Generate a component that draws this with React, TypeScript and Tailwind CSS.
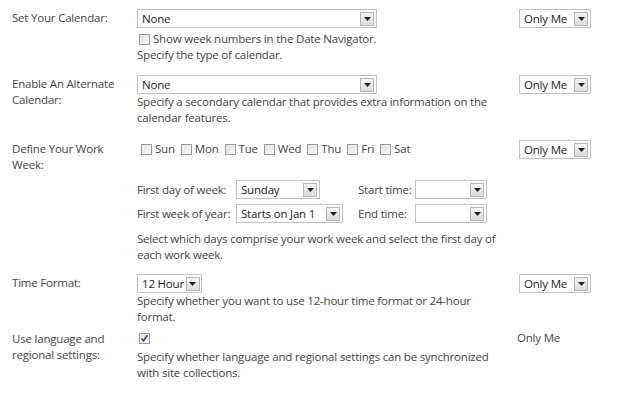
import React from 'react';

const font = { fontFamily: '"Open Sans", "Noto Sans", Arial, sans-serif' };

function Arrow() {
  return (
    <span className="flex h-[14px] w-[14px] shrink-0 items-center justify-center border border-[#b5b5b5] bg-gradient-to-b from-[#f4f4f4] to-[#dcdcdc]">
      <svg width="7" height="4" viewBox="0 0 7 4">
        <path d="M0 0h7L3.5 4z" fill="#222" />
      </svg>
    </span>
  );
}

function Select({ value = '', width }: { value?: string; width: string }) {
  return (
    <div className={`flex h-[19px] items-center justify-between gap-[2px] border border-[#c2c2c2] bg-white pl-[4px] pr-[2px] text-[#222] ${width}`}>
      <span className="whitespace-nowrap leading-none">{value}</span>
      <Arrow />
    </div>
  );
}

function Check({ checked = false }: { checked?: boolean }) {
  return (
    <span className="flex h-[11px] w-[11px] shrink-0 items-center justify-center border border-[#9a9a9a] bg-gradient-to-br from-[#e2e2e2] to-[#f8f8f8]">
      {checked && (
        <svg width="9" height="9" viewBox="0 0 9 9">
          <path d="M1.5 4.5l2 2.3L7.5 1.2" stroke="#2a3f8f" strokeWidth="1.6" fill="none" />
        </svg>
      )}
    </span>
  );
}

function Row({
  label,
  right,
  children,
  className = '',
}: {
  label: React.ReactNode;
  right?: React.ReactNode;
  children: React.ReactNode;
  className?: string;
}) {
  return (
    <div className={`flex items-start ${className}`}>
      <div className="w-[137px] shrink-0 pl-[12px] pr-2 pt-[1px] leading-[16px] text-[#444]">{label}</div>
      <div className="w-[382px] shrink-0">{children}</div>
      <div>{right}</div>
    </div>
  );
}

const days = ['Sun', 'Mon', 'Tue', 'Wed', 'Thu', 'Fri', 'Sat'];

export default function App() {
  return (
    <div className="h-[411px] w-[624px] bg-white pt-[9px] text-[11.5px] tracking-[-0.2px] text-[#444]" style={font}>
      {/* calendar type */}
      <Row label="Set Your Calendar:" right={<Select value="Only Me" width="w-[72px]" />}>
        <Select value="None" width="w-[240px]" />
        <div className="mt-[3px] flex h-[16px] items-center gap-[3px] pl-[2px]">
          <Check />
          <span>Show week numbers in the Date Navigator.</span>
        </div>
        <p className="leading-[16px]">Specify the type of calendar.</p>
      </Row>

      {/* alternate calendar */}
      <Row className="mt-[12px]" label={<>Enable An Alternate<br />Calendar:</>} right={<Select value="Only Me" width="w-[72px]" />}>
        <Select value="None" width="w-[240px]" />
        <p className="w-[360px] leading-[16px]">Specify a secondary calendar that provides extra information on the calendar features.</p>
      </Row>

      {/* work week */}
      <Row className="mt-[14px]" label={<>Define Your Work<br />Week:</>} right={<Select value="Only Me" width="w-[72px]" />}>
        <div className="flex h-[18px] items-center gap-[6px] pl-[4px]">
          {days.map((d) => (
            <label key={d} className="flex items-center gap-[3px]">
              <Check />
              <span>{d}</span>
            </label>
          ))}
        </div>
        <div className="mt-[22px] grid grid-cols-[99px_122px_57px_72px] items-center gap-y-[5px] whitespace-nowrap">
          <span>First day of week:</span>
          <Select value="Sunday" width="w-[84px]" />
          <span>Start time:</span>
          <Select width="w-[72px]" />
          <span>First week of year:</span>
          <Select value="Starts on Jan 1" width="w-[107px]" />
          <span>End time:</span>
          <Select width="w-[72px]" />
        </div>
        <p className="mt-[8px] w-[362px] leading-[16px]">Select which days comprise your work week and select the first day of each work week.</p>
      </Row>

      {/* time format */}
      <Row className="mt-[11px]" label="Time Format:" right={<Select value="Only Me" width="w-[72px]" />}>
        <Select value="12 Hour" width="w-[65px]" />
        <p className="w-[360px] leading-[16px]">Specify whether you want to use 12-hour time format or 24-hour format.</p>
      </Row>

      {/* regional settings */}
      <Row className="mt-[5px]" label={<>Use language and<br />regional settings:</>} right={<span className="-ml-[2px] block leading-[16px]">Only Me</span>}>
        <div className="flex h-[16px] items-center pl-[2px]">
          <Check checked />
        </div>
        <p className="mt-[3px] w-[360px] leading-[16px]">Specify whether language and regional settings can be synchronized with site collections.</p>
      </Row>
    </div>
  );
}
